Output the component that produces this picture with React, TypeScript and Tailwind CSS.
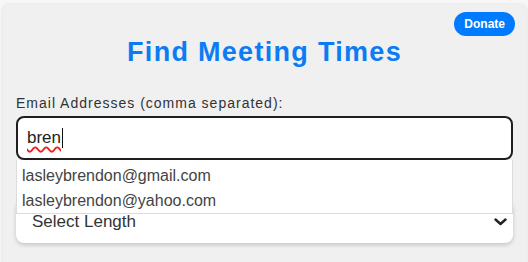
import React from "react";

export default function App() {
  return (
    <div className="h-screen bg-[#f7f7f7] pt-[5px] pl-[3px] pr-[2px] overflow-hidden" style={{ fontFamily: '"Liberation Sans", Arial, sans-serif' }}>
      <div className="relative h-[300px] rounded-[6px] bg-[#f0f0f0] px-[13px] pt-[33px] shadow-[0_0_4px_rgba(0,0,0,0.12)]">
        <button className="absolute right-[11px] top-[7px] h-[24px] rounded-full bg-[#007bff] px-[10px] text-[12px] font-bold leading-[24px] text-white">
          Donate
        </button>
        <h1 className="text-center text-[27px] font-bold leading-[28px] tracking-[1.3px] text-[#0b7cf3]">
          Find Meeting Times
        </h1>
        <div className="mt-[27px] text-[14px] leading-[20px] tracking-[1px] text-[#333]">
          Email Addresses (comma separated):
        </div>
        <div className="relative mt-[3px]">
          <div className="flex h-[44px] items-center rounded-[8px] border-2 border-[#1e1e1e] bg-white pl-[9px] text-[17px] text-[#222]">
            <span className="underline decoration-wavy decoration-[#f02020] decoration-[1.5px] underline-offset-[3px]">bren</span>
            <span className="ml-[1px] h-[20px] w-[1px] bg-[#111]" />
          </div>
          <div className="absolute left-0 right-0 top-full z-10 border-x border-b border-[#dcdcdc] bg-white pt-[3px] text-[16px] leading-[25px] text-[#444]">
            <div className="pl-[5px]">lasleybrendon@gmail.com</div>
            <div className="pl-[5px]">lasleybrendon@yahoo.com</div>
          </div>
        </div>
        <div className="mt-[40px] flex h-[43px] items-center justify-between rounded-[8px] bg-white pl-[16px] pr-[6px] text-[17px] text-[#333] shadow-[0_2px_4px_rgba(0,0,0,0.18)]">
          <span>Select Length</span>
          <svg width="13" height="8" viewBox="0 0 13 8">
            <path d="M1.5 1.5 L6.5 6 L11.5 1.5" fill="none" stroke="#222" strokeWidth="2.4" strokeLinecap="round" strokeLinejoin="round" />
          </svg>
        </div>
      </div>
    </div>
  );
}
